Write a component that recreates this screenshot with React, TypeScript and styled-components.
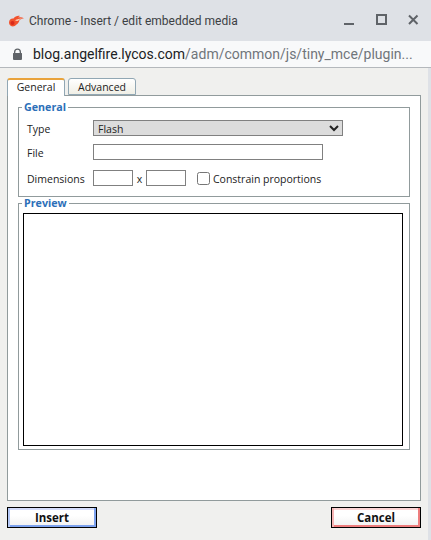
import React from "react";
import styled, { createGlobalStyle } from "styled-components";

const GlobalStyle = createGlobalStyle`
  html, body {
    margin: 0;
    padding: 0;
    background: #dee1e6;
  }
  #root {
    width: 431px;
    height: 540px;
    overflow: hidden;
  }
`;

const Window = styled.div`
  width: 431px;
  height: 540px;
  display: flex;
  flex-direction: column;
  overflow: hidden;
`;

const TitleBar = styled.div`
  box-sizing: border-box;
  height: 41px;
  flex: none;
  display: flex;
  align-items: center;
  padding: 1px 9px 0 9px;
  background: #dee1e6;
  font: 12px Roboto, sans-serif;
  color: #3c4043;
`;

const TitleText = styled.span`
  margin-left: 5px;
  flex: 1;
  white-space: nowrap;
`;

const WindowButton = styled.span`
  width: 16px;
  height: 16px;
  margin-left: 16px;
  display: flex;
  color: #5f6368;

  svg {
    display: block;
  }
`;

const UrlBar = styled.div`
  box-sizing: border-box;
  height: 27px;
  flex: none;
  display: flex;
  align-items: center;
  padding: 0 0 0 13px;
  background: #f8f9fa;
  border-bottom: 1px solid #b4b8bc;
  font: 14px Roboto, sans-serif;
  color: #70757a;
  white-space: nowrap;

  svg {
    flex: none;
  }
`;

const Host = styled.span`
  color: #202124;
  margin-left: 11px;
`;

const Content = styled.div`
  flex: 1;
  width: 428px;
  box-sizing: border-box;
  padding: 10px 7px 12px 7px;
  background: #f0f0ee;
  display: flex;
  flex-direction: column;
  font: 10.5px "Open Sans", sans-serif;
  color: #222;
`;

const Tabs = styled.div`
  height: 17px;
  display: flex;
  gap: 3px;
  position: relative;
  z-index: 1;
`;

const Tab = styled.div<{ $active?: boolean }>`
  box-sizing: border-box;
  height: ${(p) => (p.$active ? 18 : 17)}px;
  width: ${(p) => (p.$active ? 58 : 68)}px;
  padding-bottom: ${(p) => (p.$active ? 2 : 0)}px;
  display: flex;
  align-items: center;
  justify-content: center;
  border: 1px solid #91a7b4;
  border-bottom: ${(p) => (p.$active ? "none" : "1px solid #91a7b4")};
  border-top: ${(p) => (p.$active ? "2px solid #e9a33c" : "1px solid #91a7b4")};
  border-radius: 3px 3px 0 0;
  background: ${(p) =>
    p.$active ? "#fff" : "linear-gradient(#fff, #f0efe6)"};
`;

const Panel = styled.div`
  box-sizing: border-box;
  width: 414px;
  height: 406px;
  border: 1px solid #919b9c;
  background: #fff;
  padding: 5px 10px 0;
  display: flex;
  flex-direction: column;
`;

const Group = styled.fieldset<{ $height: number }>`
  box-sizing: border-box;
  height: ${(p) => p.$height}px;
  margin: 0;
  min-width: 0;
  border: 1px solid #919b9c;
  padding: 0 6px 0 8px;
`;

const Legend = styled.legend`
  padding: 0 2px;
  margin-left: -5px;
  font-weight: 700;
  font-size: 10.7px;
  line-height: 13px;
  color: #2b6fb8;
`;

const Row = styled.div<{ $top: number }>`
  display: flex;
  align-items: center;
  height: 16px;
  margin-top: ${(p) => p.$top}px;
`;

const Label = styled.label`
  width: 66px;
  flex: none;
  padding-top: 2px;
`;

const CheckText = styled.span`
  padding-top: 2px;
`;

const Select = styled.select`
  box-sizing: border-box;
  width: 250px;
  height: 16px;
  padding: 0;
  border: 1px solid #808080;
  border-radius: 0;
  background-color: #dcdcdc;
  font: 10.5px "Open Sans", sans-serif;
  color: #222;
  outline: none;
`;

const TextInput = styled.input<{ $width: number }>`
  box-sizing: border-box;
  width: ${(p) => p.$width}px;
  height: 16px;
  padding: 0;
  border: 1px solid #808080;
  background: #fff;
`;

const Times = styled.span`
  width: 13px;
  padding-top: 2px;
  text-align: center;
`;

const Check = styled.input`
  width: 13px;
  height: 13px;
  margin: 0 3px 0 11px;
`;

const PreviewBox = styled.div`
  box-sizing: border-box;
  width: 380px;
  height: 233px;
  margin-top: 3px;
  margin-left: -4px;
  border: 1px solid #000;
  background: #fff;
`;

const Footer = styled.div`
  width: 414px;
  margin-top: 6px;
  display: flex;
  justify-content: space-between;
`;

const ActionButton = styled.button<{
  $shade: string;
  $left: string;
  $top: string;
}>`
  box-sizing: border-box;
  width: 90px;
  height: 21px;
  padding: 0;
  border: 1px solid #000;
  background: linear-gradient(#fff 40%, #f0f0f0);
  box-shadow: inset 2px 0 0 ${(p) => p.$left}, inset -2px 0 0 ${(p) => p.$shade},
    inset 0 -2px 0 ${(p) => p.$shade}, inset 0 2px 0 ${(p) => p.$top};
  font: 700 11.5px "Open Sans", sans-serif;
  color: #111;
`;

const Flame = () => (
  <svg width="15" height="12" viewBox="0 0 15 12">
    <path
      d="M0 7.500C0 4.500 2.500 3 4.500 3.500 6 1.500 8.500.5 11 1 10 1.500 9.500 2 9.200 2.500 11 2 13 2.200 15 3.200 13 3.500 11.500 4.200 10.500 5 10 7.500 8.500 9 7.500 9.500 6 11.500 3.500 12 2 11 .7 10.200 0 9 0 7.500Z"
      fill="#f2522e"
    />
    <path
      d="M6 5.200C8 4.200 11 3.200 13.500 3.200 11.500 3.800 10.500 4.500 9 5.800 8 6.200 7 5.900 6 5.200Z"
      fill="#fbd0b8"
    />
    <circle cx="3.500" cy="8" r="2" fill="#d92b1c" />
  </svg>
);

const App = (): JSX.Element => {
  return (
    <Window>
      <GlobalStyle />
      <TitleBar>
        <Flame />
        <TitleText>Chrome - Insert / edit embedded media</TitleText>
        <WindowButton>
          <svg width="16" height="16" viewBox="0 0 16 16">
            <rect x="2" y="10" width="10" height="2" fill="currentColor" />
          </svg>
        </WindowButton>
        <WindowButton>
          <svg width="16" height="16" viewBox="0 0 16 16">
            <rect
              x="3"
              y="2"
              width="9"
              height="9"
              fill="none"
              stroke="currentColor"
              strokeWidth="2"
            />
          </svg>
        </WindowButton>
        <WindowButton>
          <svg width="16" height="16" viewBox="0 0 16 16">
            <path
              d="M3 2.500l8.500 8.500M11.500 2.500L3 11"
              stroke="currentColor"
              strokeWidth="2"
              fill="none"
            />
          </svg>
        </WindowButton>
      </TitleBar>

      <UrlBar>
        <svg width="9" height="12" viewBox="0 0 9 12">
          <path
            d="M1 5V4a3.500 3.500 0 0 1 7 0v1h.500a.5.5 0 0 1 .5.500V11a1 1 0 0 1-1 1H1a1 1 0 0 1-1-1V5.500A.5.5 0 0 1 .5 5zM2.300 5h4.400V4a2.200 2.200 0 0 0-4.400 0z"
            fill="#5f6368"
          />
        </svg>
        <Host>blog.angelfire.lycos.com</Host>
        /adm/common/js/tiny_mce/plugin...
      </UrlBar>

      <Content>
        <Tabs>
          <Tab $active>General</Tab>
          <Tab>Advanced</Tab>
        </Tabs>
        <Panel>
          <Group $height={96}>
            <Legend>General</Legend>
            <Row $top={6}>
              <Label>Type</Label>
              <Select defaultValue="Flash">
                <option>Flash</option>
              </Select>
            </Row>
            <Row $top={8}>
              <Label>File</Label>
              <TextInput $width={230} />
            </Row>
            <Row $top={10}>
              <Label>Dimensions</Label>
              <TextInput $width={40} />
              <Times>x</Times>
              <TextInput $width={40} />
              <Check type="checkbox" />
              <CheckText>Constrain proportions</CheckText>
            </Row>
          </Group>
          <Group $height={253}>
            <Legend>Preview</Legend>
            <PreviewBox />
          </Group>
        </Panel>
        <Footer>
          <ActionButton $shade="#7da2ee" $left="#b4c8f6" $top="#d4dcfa">
            Insert
          </ActionButton>
          <ActionButton $shade="#ee7d7d" $left="#f6b4b4" $top="#fad4d4">
            Cancel
          </ActionButton>
        </Footer>
      </Content>
    </Window>
  );
};

export default App;
